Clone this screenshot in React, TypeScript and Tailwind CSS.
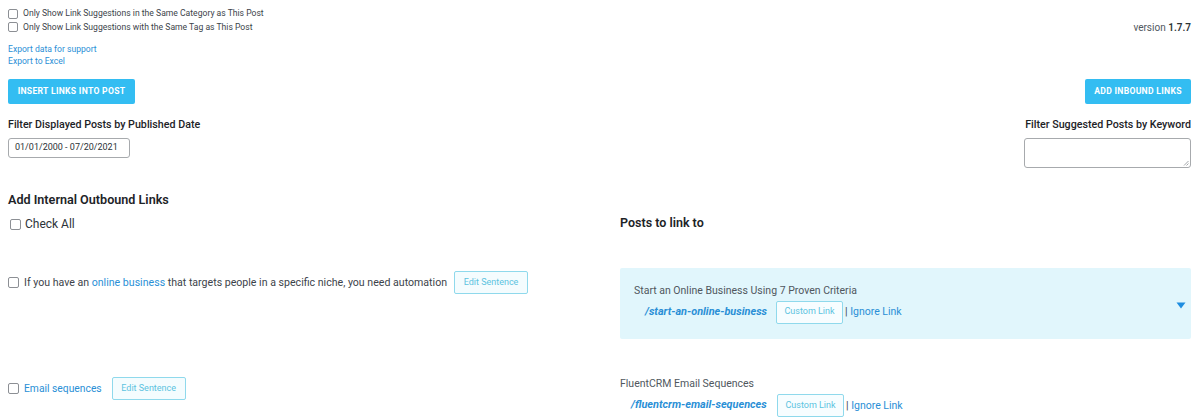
const FONT = "font-['Roboto','Liberation_Sans',sans-serif]"

function Box({ className = '' }: { className?: string }) {
  return <span className={`inline-block shrink-0 rounded-[2px] border border-[#8c8f94] bg-white ${className}`} />
}

function OutlineBtn({ label, className = '' }: { label: string; className?: string }) {
  return (
    <span className={`inline-flex h-[23px] items-center justify-center rounded-[2px] border border-[#8fd9ec] bg-[#f4fcfe] text-[9px] text-[#5cc3e0] ${className}`}>
      {label}
    </span>
  )
}

export default function App() {
  return (
    <div className={`${FONT} h-[420px] w-[1200px] overflow-hidden bg-white pl-[8px] pr-[9px] pt-[7px] text-[#3c434a]`}>
      {/* Top options */}
      <div className="flex items-end justify-between">
        <div className="flex flex-col">
          <label className="flex h-[13px] items-center gap-[5px] text-[8.6px]">
            <Box className="h-[10px] w-[10px]" />
            Only Show Link Suggestions in the Same Category as This Post
          </label>
          <label className="flex h-[14px] items-center gap-[5px] text-[8.6px]">
            <Box className="h-[10px] w-[10px]" />
            Only Show Link Suggestions with the Same Tag as This Post
          </label>
        </div>
        <div className="text-[10px] leading-[13px] text-[#50575e]">
          version <span className="font-semibold text-[#2c3338]">1.7.7</span>
        </div>
      </div>

      <div className="mt-[9px] flex flex-col text-[8.6px] leading-[12px] text-[#2a8fd6]">
        <span>Export data for support</span>
        <span>Export to Excel</span>
      </div>

      {/* Buttons + filters */}
      <div className="mt-[12px] flex items-start justify-between">
        <div className="flex flex-col items-start">
          <span className="flex h-[25px] w-[127px] items-center justify-center rounded-[2px] bg-[#33bdf2] text-[8.6px] font-bold tracking-[0.3px] text-white">
            INSERT LINKS INTO POST
          </span>
          <span className="mt-[15px] text-[10.7px] font-medium leading-[12px] text-[#1d2327]">
            Filter Displayed Posts by Published Date
          </span>
          <span className="mt-[7px] flex h-[20px] w-[122px] items-center rounded-[3px] border border-[#a7aaad] pl-[6px] text-[9px] text-[#2c3338]">
            01/01/2000 - 07/20/2021
          </span>
        </div>
        <div className="flex flex-col items-end">
          <span className="flex h-[25px] w-[106px] items-center justify-center rounded-[2px] bg-[#33bdf2] text-[8.6px] font-bold tracking-[0.3px] text-white">
            ADD INBOUND LINKS
          </span>
          <span className="mt-[15px] text-[10.7px] font-medium leading-[12px] text-[#1d2327]">
            Filter Suggested Posts by Keyword
          </span>
          <span className="relative mt-[7px] block h-[30px] w-[167px] rounded-[3px] border border-[#a7aaad]">
            <svg className="absolute bottom-[1px] right-[1px]" width="6" height="6" viewBox="0 0 6 6">
              <path d="M5.5 1 L1 5.5 M5.5 3.5 L3.5 5.5" stroke="#8c8f94" strokeWidth="0.8" />
            </svg>
          </span>
        </div>
      </div>

      {/* Links section */}
      <div className="grid grid-cols-[612px_1fr]">
        <div className="mt-[24px] flex flex-col">
          <span className="text-[12.6px] font-semibold leading-[16px] text-[#1d2327]">Add Internal Outbound Links</span>
          <label className="mt-[9px] flex h-[14px] items-center gap-[4px] pl-[2px] text-[12px] text-[#2c3338]">
            <Box className="h-[11px] w-[11px]" />
            Check All
          </label>
        </div>
        <div className="flex items-end">
          <span className="pb-[1px] text-[12.5px] font-semibold leading-[14px] text-[#1d2327]">Posts to link to</span>
        </div>
      </div>

      {/* Row 1 */}
      <div className="mt-[37px] grid grid-cols-[612px_1fr] items-start">
        <div className="mt-[3px] flex items-center">
          <Box className="h-[11px] w-[11px]" />
          <span className="ml-[5px] text-[10.6px] text-[#3c434a]">
            If you have an <span className="text-[#2a8fd6]">online business</span> that targets people in a specific niche, you need automation
          </span>
          <OutlineBtn label="Edit Sentence" className="ml-[7px] w-[74px]" />
        </div>
        <div className="flex h-[71px] items-center justify-between rounded-[2px] bg-[#e1f6fc] pl-[14px] pr-[5px]">
          <div className="flex flex-col">
            <span className="text-[10.5px] leading-[13px] text-[#50575e]">Start an Online Business Using 7 Proven Criteria</span>
            <div className="mt-[4px] flex items-center pl-[11px] text-[10.5px]">
              <span className="w-[131px] text-[10.9px] font-bold italic text-[#2a8fd6]">/start-an-online-business</span>
              <OutlineBtn label="Custom Link" className="w-[67px] bg-[#f7fdff]" />
              <span className="ml-[2px] text-[#2a8fd6]"><span className="text-[#3c434a]">|</span> Ignore Link</span>
            </div>
          </div>
          <svg width="10" height="7" viewBox="0 0 10 7" className="mb-[-4px]">
            <path d="M0.5 0.5 H9.5 L5 6.5 Z" fill="#1e8de0" />
          </svg>
        </div>
      </div>

      {/* Row 2 */}
      <div className="mt-[38px] grid grid-cols-[612px_1fr] items-start">
        <div className="flex items-center">
          <Box className="h-[11px] w-[11px]" />
          <span className="ml-[5px] text-[10.3px] text-[#2a8fd6]">Email sequences</span>
          <OutlineBtn label="Edit Sentence" className="ml-[10px] w-[74px]" />
        </div>
        <div className="flex flex-col">
          <span className="text-[10.5px] leading-[13px] text-[#50575e]">FluentCRM Email Sequences</span>
          <div className="mt-[4px] flex items-center pl-[11px] text-[10.5px]">
            <span className="w-[146px] text-[10.9px] font-bold italic text-[#2a8fd6]">/fluentcrm-email-sequences</span>
            <OutlineBtn label="Custom Link" className="w-[67px] bg-[#f7fdff]" />
            <span className="ml-[2px] text-[#2a8fd6]"><span className="text-[#3c434a]">|</span> Ignore Link</span>
          </div>
        </div>
      </div>
    </div>
  )
}
